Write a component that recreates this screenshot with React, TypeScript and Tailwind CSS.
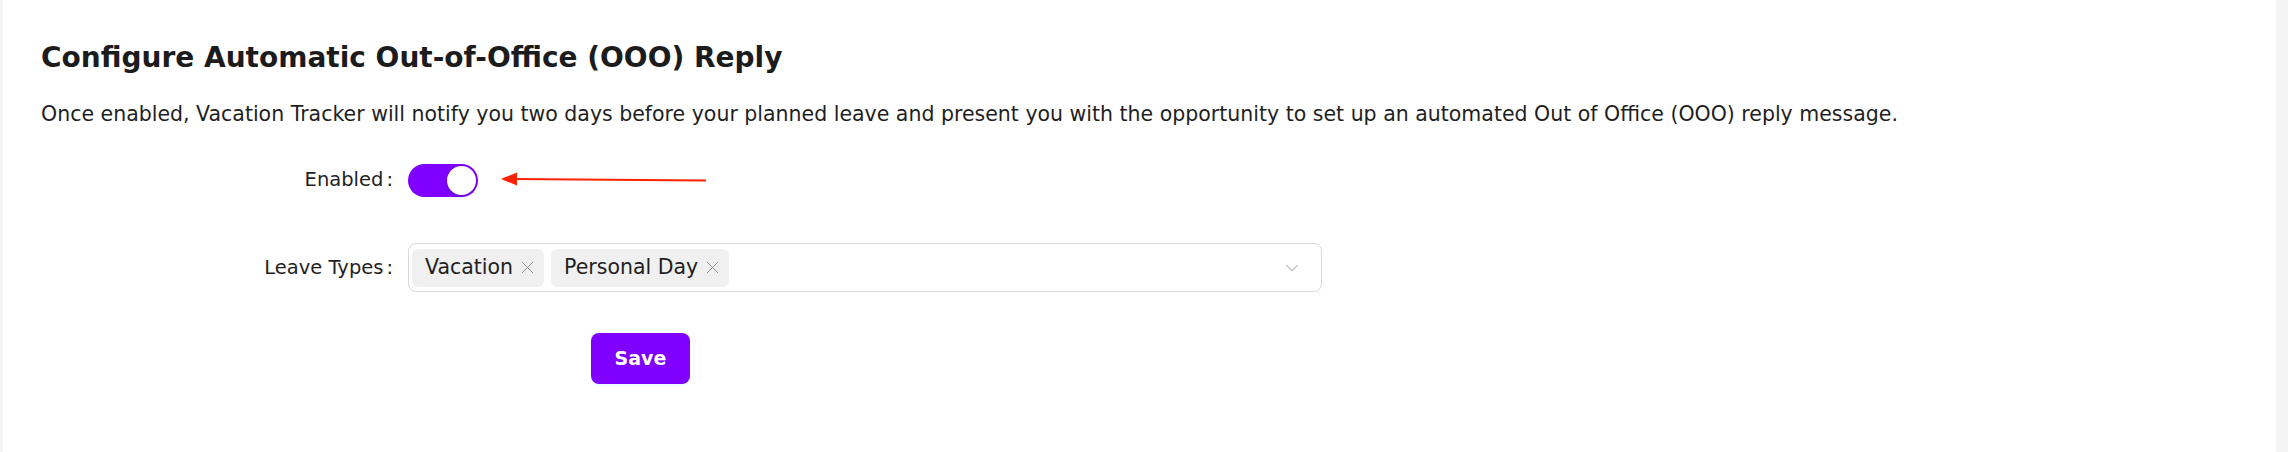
import { ChevronDown, X } from 'lucide-react';

const font = { fontFamily: '"DejaVu Sans", "Noto Sans", sans-serif' };

const Tag = ({ label }: { label: string }) => (
  <span className="flex h-[38px] items-center gap-[4px] rounded-[6px] bg-[#f0f0f0] pl-[13px] pr-[6px] text-[20.5px] text-[#1f1f1f]">
    {label}
    <X className="h-[21px] w-[21px] text-[#8c8c8c]" strokeWidth={1.1} />
  </span>
);

const FormLabel = ({ text }: { text: string }) => (
  <div className="w-[352px] shrink-0 text-right text-[19.5px] text-[#1f1f1f]">
    {text}
    <span className="ml-[3px]">:</span>
  </div>
);

export default function App() {
  return (
    <div className="flex h-[452px] w-full bg-[#f4f4f4]" style={font}>
      <div className="w-[3px] shrink-0" />
      <main className="flex-1 bg-white pl-[38px] pt-[40px]">
        <h1 className="text-[28px] font-bold leading-[36px] text-[#1c1c1c]">
          Configure Automatic Out-of-Office (OOO) Reply
        </h1>
        <p className="mt-[24px] text-[20.5px] leading-[28px] text-[#1f1f1f]">
          Once enabled, Vacation Tracker will notify you two days before your planned leave and present you with the opportunity to set up an automated Out of Office (OOO) reply message.
        </p>

        {/* Enabled */}
        <div className="mt-[32px] flex h-[40px] items-center">
          <FormLabel text="Enabled" />
          <div className="ml-[15px] flex h-[33px] w-[70px] items-center justify-end rounded-full bg-[#7f00ff] p-[2px]">
            <span className="h-[29px] w-[29px] rounded-full bg-white shadow-[0_2px_4px_rgba(0,35,11,0.2)]" />
          </div>
          <svg className="ml-[23px]" width="206" height="18" viewBox="0 0 206 18">
            <line x1="12" y1="8" x2="205" y2="9.5" stroke="#ff2200" strokeWidth="2.2" />
            <polygon points="0,8 16,1.5 16,14.5" fill="#ff2200" />
          </svg>
        </div>

        {/* Leave types */}
        <div className="mt-[43px] flex items-center">
          <FormLabel text="Leave Types" />
          <div className="ml-[15px] flex h-[49px] w-[914px] items-center gap-[7px] rounded-[8px] border border-[#d9d9d9] pl-[3px] pr-[18px]">
            <Tag label="Vacation" />
            <Tag label="Personal Day" />
            <ChevronDown className="ml-auto h-[22px] w-[22px] text-[#bfbfbf]" strokeWidth={1.25} />
          </div>
        </div>

        {/* Save */}
        <div className="mt-[41px] pl-[550px]">
          <button className="h-[51px] w-[99px] rounded-[8px] bg-[#7f00ff] text-[19px] font-bold text-white shadow-[0_2px_0_rgba(5,145,255,0.06)]">
            Save
          </button>
        </div>
      </main>
      <div className="w-[12px] shrink-0" />
    </div>
  );
}
